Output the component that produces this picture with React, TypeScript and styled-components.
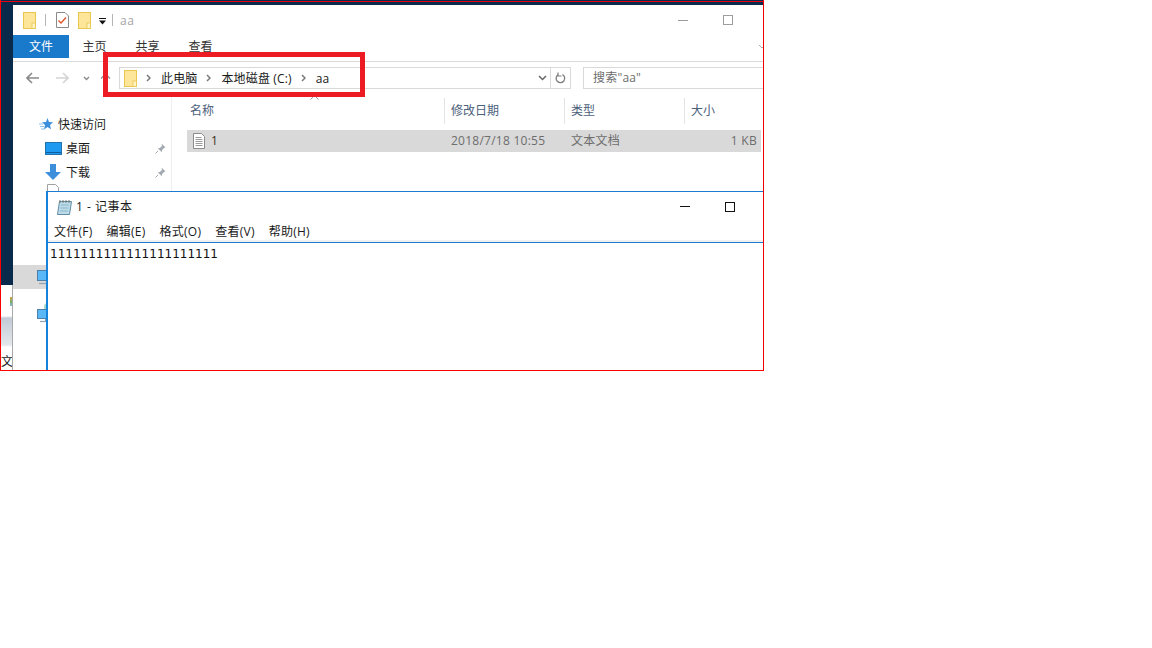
import React from "react";
import styled, { createGlobalStyle } from "styled-components";

const Global = createGlobalStyle`
  html, body { margin: 0; padding: 0; background: #fff; }
  body { font-family: "Open Sans", "Noto Sans CJK SC", sans-serif; font-size: 12px; color: #1a1a1a; }
`;

const Shot = styled.div`
  position: relative;
  width: 764px;
  height: 371px;
  box-sizing: border-box;
  overflow: hidden;
  background: #0a2a4c;
  border-left: 1px solid #f00;
  border-right: 1px solid #e00;
  border-bottom: 1px solid #f00;
`;
const TopStripe = styled.div`
  height: 1px;
  margin-top: 1px;
  background: #e8000f;
`;
const DesktopPeek = styled.div`
  position: absolute;
  left: 0;
  top: 285px;
  width: 11px;
  height: 85px;
  background: linear-gradient(#fff 0, #fff 31px, #c2cbd6 33px, #e4e8ec 60px, #fff 62px);
  border-right: 1px solid #a8a8a8;
`;
const PeekBadge = styled.i`
  position: absolute;
  right: 0;
  top: 12px;
  width: 2px;
  height: 9px;
  background: linear-gradient(#e0a040, #6fb06a 55%, #8fb8d8);
`;
const PeekText = styled.span`
  position: absolute;
  left: 0;
  top: 69px;
  width: 11px;
  overflow: hidden;
  white-space: nowrap;
  font-size: 12px;
  line-height: 16px;
  color: #222;
`;
const Explorer = styled.div`
  position: absolute;
  left: 12px;
  top: 5px;
  width: 750px;
  height: 365px;
  background: #fff;
  display: flex;
  flex-direction: column;
`;
const QuickBar = styled.div`
  height: 30px;
  display: flex;
  align-items: center;
  padding-left: 10px;
  flex: none;
`;
const QuickSep = styled.i<{ $gap: number }>`
  display: block;
  width: 1px;
  height: 12px;
  background: #b5b5b5;
  margin: 0 ${(p) => p.$gap}px;
`;
const WindowTitle = styled.span`
  color: #a6a6a6;
  font-size: 12px;
  margin-left: 2px;
  letter-spacing: 0.5px;
  flex: 1;
`;
const WindowBtns = styled.div`
  display: flex;
  align-items: center;
  gap: 35px;
  margin-right: 30px;
`;
const MinLine = styled.i<{ $c: string }>`
  display: block;
  width: 10px;
  height: 1px;
  background: ${(p) => p.$c};
`;
const MaxBox = styled.i<{ $c: string }>`
  display: block;
  width: 8px;
  height: 8px;
  border: 1px solid ${(p) => p.$c};
`;
const Ribbon = styled.div`
  height: 26px;
  flex: none;
  display: flex;
  box-sizing: content-box;
  border-bottom: 1px solid #dadada;
  position: relative;
  margin-bottom: -1px;
`;
const FileTab = styled.div`
  width: 56px;
  height: 23px;
  background: #1979ca;
  color: #fff;
  text-align: center;
  line-height: 23px;
  font-size: 12px;
  margin-right: -1px;
`;
const RibbonTab = styled.div`
  width: 53px;
  text-align: center;
  line-height: 23px;
  font-size: 12px;
  color: #333;
`;
const Collapse = styled.svg`
  position: absolute;
  right: -2px;
  top: 9px;
`;
const NavRow = styled.div`
  height: 34px;
  margin-bottom: 1px;
  flex: none;
  display: flex;
  align-items: center;
  box-sizing: border-box;
`;
const NavArrows = styled.div`
  width: 106px;
  padding-left: 13px;
  box-sizing: border-box;
  display: flex;
  align-items: center;
  flex: none;
`;
const AddressBar = styled.div`
  width: 452px;
  height: 22px;
  box-sizing: border-box;
  border: 1px solid #d9d9d9;
  display: flex;
  align-items: center;
  padding-left: 4px;
  flex: none;
`;
const Crumb = styled.span`
  font-size: 12px;
  color: #1a1a1a;
  white-space: nowrap;
  letter-spacing: 0.15px;
`;
const CrumbSep = styled.svg`
  margin: 0 10px 0 9px;
  flex: none;
`;
const AddressEnd = styled.div`
  margin-left: auto;
  display: flex;
  align-items: center;
  height: 100%;
`;
const DropCell = styled.div`
  width: 16px;
  display: flex;
  justify-content: center;
`;
const RefreshCell = styled.div`
  width: 19px;
  height: 100%;
  border-left: 1px solid #d9d9d9;
  display: flex;
  align-items: center;
  justify-content: center;
`;
const SearchBox = styled.div`
  margin-left: 12px;
  flex: 1;
  height: 22px;
  box-sizing: border-box;
  border: 1px solid #d9d9d9;
  border-right: none;
  padding-left: 9px;
  line-height: 20px;
  font-size: 12px;
  letter-spacing: 0.2px;
  color: #6d6d6d;
`;
const Body = styled.div`
  flex: 1;
  display: flex;
  min-height: 0;
`;
const Sidebar = styled.div`
  width: 158px;
  flex: none;
  border-right: 1px solid #efefef;
  box-sizing: content-box;
  padding-top: 16px;
  position: relative;
`;
const NavItem = styled.div<{ $indent: number }>`
  height: 24px;
  display: flex;
  align-items: center;
  padding-left: ${(p) => p.$indent}px;
  font-size: 12px;
  color: #1a1a1a;
  position: relative;
`;
const NavLabel = styled.span<{ $gap: number }>`
  margin-left: ${(p) => p.$gap}px;
`;
const Pin = styled.svg`
  position: absolute;
  left: 142px;
  top: 7px;
`;
const HiddenDoc = styled.svg`
  position: absolute;
  left: 34px;
  top: 88px;
`;
const SelectedNav = styled.div`
  position: absolute;
  left: 0;
  top: 169px;
  width: 33px;
  height: 24px;
  background: #d9d9d9;
  display: flex;
  align-items: center;
  justify-content: flex-end;
`;
const NetworkPc = styled.div`
  position: absolute;
  left: 24px;
  top: 206px;
`;
const Files = styled.div`
  flex: 1;
  min-width: 0;
  padding-left: 15px;
`;
const HeaderRow = styled.div`
  display: grid;
  grid-template-columns: 257px 120px 120px 1fr;
  height: 26px;
  margin-top: 2px;
  align-items: stretch;
`;
const HeaderCell = styled.div<{ $first?: boolean }>`
  padding-left: ${(p) => (p.$first ? 3 : 6)}px;
  border-left: ${(p) => (p.$first ? "none" : "1px solid #e5e5e5")};
  color: #4c607a;
  font-size: 12px;
  line-height: 26px;
  position: relative;
`;
const SortCaret = styled.svg`
  position: absolute;
  left: 123px;
  top: -3px;
`;
const FileRow = styled.div`
  display: grid;
  grid-template-columns: 258px 120px 120px 1fr;
  height: 22px;
  width: 574px;
  margin-top: 6px;
  padding-bottom: 0;
  background: #d9d9d9;
  align-items: center;
  font-size: 12px;
  line-height: 20px;
  color: #6d6d6d;
`;
const NameCell = styled.div`
  display: flex;
  align-items: center;
  padding-left: 6px;
  color: #3a2f20;
  gap: 6px;
  margin-top: -1px;
`;
const DateCell = styled.div`
  padding-left: 6px;
  white-space: nowrap;
  letter-spacing: 0.25px;
  margin-top: -1px;
`;
const SizeCell = styled.div`
  text-align: right;
  padding-right: 4px;
  letter-spacing: 0.3px;
  margin-top: -1px;
`;
const Notepad = styled.div`
  position: absolute;
  left: 45px;
  top: 191px;
  width: 718px;
  height: 180px;
  box-sizing: border-box;
  background: #fff;
  border-top: 1px solid #1c7cd0;
  border-left: 2px solid #1383dc;
  display: flex;
  flex-direction: column;
`;
const NoteTitle = styled.div`
  height: 29px;
  flex: none;
  display: flex;
  align-items: center;
  padding-left: 8px;
  font-size: 12px;
  color: #1a1a1a;
`;
const NoteTitleText = styled.span`
  margin: -2px 0 0 3px;
  flex: 1;
  letter-spacing: 0.5px;
`;
const NoteBtns = styled.div`
  display: flex;
  align-items: center;
  gap: 35px;
  margin-right: 29px;
`;
const NoteMenu = styled.div`
  height: 22px;
  flex: none;
  display: flex;
  align-items: center;
  padding: 0 0 1px 6px;
  box-sizing: border-box;
  gap: 14px;
  font-size: 12px;
  letter-spacing: 0.25px;
  color: #1a1a1a;
  border-bottom: 1px solid #1c7cd0;
  box-shadow: inset 0 -2px 0 #f0f0f0;
`;
const NoteText = styled.div`
  font-family: "DejaVu Sans", sans-serif;
  font-size: 12px;
  line-height: 16px;
  padding: 3px 0 0 2px;
  color: #111;
`;
const Callout = styled.div`
  position: absolute;
  left: 102px;
  top: 52px;
  width: 262px;
  height: 45px;
  box-sizing: border-box;
  border: 5px solid #ed1c24;
  pointer-events: none;
`;

const Folder = () => (
  <svg width="13" height="17" viewBox="0 0 13 17">
    <rect x="0.500" y="0.500" width="12" height="16" fill="#fde59a" stroke="#e9c64d" />
    <rect x="9" y="11" width="3.500" height="5.500" fill="#fff3c6" stroke="#e9c64d" strokeWidth="0.800" />
  </svg>
);

const Chevron = () => (
  <CrumbSep width="5" height="8" viewBox="0 0 5 8">
    <path d="M1 1l3 3-3 3" fill="none" stroke="#7a7a7a" strokeWidth="1.500" />
  </CrumbSep>
);

const DocIcon = () => (
  <svg width="12" height="16" viewBox="0 0 12 16">
    <path d="M.5.5h8l3 3v12H.5z" fill="#fff" stroke="#8c8c8c" />
    <path d="M2.500 4.500h6M2.500 6.500h7M2.500 8.500h7M2.500 10.500h7M2.500 12.500h7" stroke="#9a9a9a" />
  </svg>
);

const PinIcon = () => (
  <Pin width="11" height="11" viewBox="0 0 11 11">
    <path d="M6.500.5l4 4-1.500.6-2 2.200-.2 2-4-4 2-.3 2.200-2z" fill="#a3a9b0" />
    <path d="M3 8l-2.500 2.500" stroke="#a3a9b0" />
  </Pin>
);

const Monitor = () => (
  <svg width="17" height="14" viewBox="0 0 17 14">
    <rect x=".5" y=".5" width="16" height="9" fill="#5bb8f7" stroke="#4f7fa6" />
    <path d="M3 12.500h11" stroke="#8ea2b3" strokeWidth="1.200" />
    <path d="M8.500 10v2" stroke="#8ea2b3" />
  </svg>
);

export default function App() {
  return (
    <>
      <Global />
      <Shot>
        <TopStripe />
        <DesktopPeek>
          <PeekBadge />
          <PeekText>文件</PeekText>
        </DesktopPeek>
        <Explorer>
          <QuickBar>
            <Folder />
            <QuickSep $gap={9} />
            <svg width="13" height="16" viewBox="0 0 13 16" style={{ marginLeft: 1 }}>
              <path d="M.5.5h8.500l3.500 3.500v11.500H.5z" fill="#fff" stroke="#8a8a8a" />
              <path d="M2.500 8.500l2.500 2.500 5-5.500" fill="none" stroke="#e2572d" strokeWidth="1.500" />
            </svg>
            <span style={{ width: 9 }} />
            <Folder />
            <svg width="8" height="7" viewBox="0 0 8 7" style={{ marginLeft: 8, marginTop: 3 }}>
              <path d="M0 0h7v1H0zM0 2.500h7L3.500 6.500z" fill="#111" />
            </svg>
            <QuickSep $gap={5} />
            <WindowTitle>aa</WindowTitle>
            <WindowBtns>
              <MinLine $c="#9c9c9c" />
              <MaxBox $c="#9c9c9c" />
            </WindowBtns>
          </QuickBar>
          <Ribbon>
            <FileTab>文件</FileTab>
            <RibbonTab>主页</RibbonTab>
            <RibbonTab>共享</RibbonTab>
            <RibbonTab>查看</RibbonTab>
            <Collapse width="6" height="6" viewBox="0 0 6 6">
              <path d="M0 1l3 3 3-3" fill="none" stroke="#b0b0b0" />
            </Collapse>
          </Ribbon>
          <NavRow>
            <NavArrows>
              <svg width="13" height="12" viewBox="0 0 13 12">
                <path d="M6 1L1 6l5 5M1 6h12" fill="none" stroke="#8a8a8a" strokeWidth="1.600" />
              </svg>
              <svg width="13" height="12" viewBox="0 0 13 12" style={{ marginLeft: 17 }}>
                <path d="M7 1l5 5-5 5M12 6H0" fill="none" stroke="#d4d4d4" strokeWidth="1.600" />
              </svg>
              <svg width="7" height="5" viewBox="0 0 7 5" style={{ marginLeft: 14 }}>
                <path d="M1 1l2.500 2.500L6 1" fill="none" stroke="#8a8a8a" strokeWidth="1.400" />
              </svg>
              <svg width="11" height="10" viewBox="0 0 11 10" style={{ marginLeft: 10 }}>
                <path d="M1 5.500l4.500-4.500 4.500 4.500M5.500 1v9" fill="none" stroke="#9a9a9a" strokeWidth="1.500" />
              </svg>
            </NavArrows>
            <AddressBar>
              <Folder />
              <Chevron />
              <Crumb>此电脑</Crumb>
              <Chevron />
              <Crumb>本地磁盘 (C:)</Crumb>
              <Chevron />
              <Crumb>aa</Crumb>
              <AddressEnd>
                <DropCell>
                  <svg width="9" height="6" viewBox="0 0 9 6">
                    <path d="M1 1l3.500 3.500L8 1" fill="none" stroke="#666" strokeWidth="1.500" />
                  </svg>
                </DropCell>
                <RefreshCell>
                  <svg width="11" height="12" viewBox="0 0 11 12">
                    <path d="M7.500 2.600A4.300 4.300 0 1 1 3 2.800" fill="none" stroke="#7f7f7f" strokeWidth="1.300" />
                    <path d="M3 .5v3.500h3.500" fill="none" stroke="#7f7f7f" strokeWidth="1.200" />
                  </svg>
                </RefreshCell>
              </AddressEnd>
            </AddressBar>
            <SearchBox>搜索"aa"</SearchBox>
          </NavRow>
          <Body>
            <Sidebar>
              <NavItem $indent={26}>
                <svg width="14" height="13" viewBox="0 0 14 13">
                  <path d="M8.500 0l1.500 4 4 .3-3 2.700 1 4.200-3.500-2.300L5 11.500l1-4.500-3-2.700 4-.3z" fill="#3b8fdb" />
                  <path d="M0 6h4M1 8.500h4M2 11h3" stroke="#8cc0ec" />
                </svg>
                <NavLabel $gap={5}>快速访问</NavLabel>
              </NavItem>
              <NavItem $indent={32}>
                <svg width="17" height="13" viewBox="0 0 17 13">
                  <rect x=".5" y=".5" width="16" height="12" fill="#1e9bf0" stroke="#2272b0" />
                  <path d="M1 10.500h15" stroke="#0f5f9e" />
                </svg>
                <NavLabel $gap={4}>桌面</NavLabel>
                <PinIcon />
              </NavItem>
              <NavItem $indent={32}>
                <svg width="16" height="16" viewBox="0 0 16 16">
                  <path d="M5 0h6v8h5l-8 8-8-8h5z" fill="#3d8fdc" />
                </svg>
                <NavLabel $gap={5}>下载</NavLabel>
                <PinIcon />
              </NavItem>
              <HiddenDoc width="12" height="10" viewBox="0 0 12 10">
                <path d="M.5.5h8l3 3v6H.5z" fill="#fff" stroke="#a0a0a0" />
              </HiddenDoc>
              <SelectedNav>
                <svg width="9" height="15" viewBox="0 0 9 15">
                  <rect x=".5" y=".5" width="10" height="10" fill="#5bb8f7" stroke="#4f7fa6" />
                  <path d="M2 13.500h7" stroke="#8ea2b3" strokeWidth="1.200" />
                </svg>
              </SelectedNav>
              <NetworkPc>
                <svg width="9" height="7" viewBox="0 0 9 7" style={{ display: "block", marginLeft: 5 }}>
                  <circle cx="6" cy="5" r="4" fill="#a6d8c8" />
                </svg>
                <Monitor />
              </NetworkPc>
            </Sidebar>
            <Files>
              <HeaderRow>
                <HeaderCell $first>
                  名称
                  <SortCaret width="9" height="5" viewBox="0 0 9 5">
                    <path d="M.5 4.500l4-4 4 4" fill="none" stroke="#9a9a9a" />
                  </SortCaret>
                </HeaderCell>
                <HeaderCell>修改日期</HeaderCell>
                <HeaderCell>类型</HeaderCell>
                <HeaderCell>大小</HeaderCell>
              </HeaderRow>
              <FileRow>
                <NameCell>
                  <DocIcon />1
                </NameCell>
                <DateCell>2018/7/18 10:55</DateCell>
                <DateCell>文本文档</DateCell>
                <SizeCell>1 KB</SizeCell>
              </FileRow>
            </Files>
          </Body>
        </Explorer>
        <Notepad>
          <NoteTitle>
            <svg width="17" height="16" viewBox="0 0 17 16">
              <path d="M3.500 2.500h12l-2 13h-12z" fill="#bcdcea" stroke="#5f8ca3" />
              <path d="M4 1v3M7 1v3M10 1v3M13 1v3" stroke="#777" />
              <path d="M5 6h8M4.500 9h8M4 12h8" stroke="#8fb6c9" />
            </svg>
            <NoteTitleText>1 - 记事本</NoteTitleText>
            <NoteBtns>
              <MinLine $c="#111" />
              <MaxBox $c="#111" />
            </NoteBtns>
          </NoteTitle>
          <NoteMenu>
            <span>文件(F)</span>
            <span>编辑(E)</span>
            <span>格式(O)</span>
            <span>查看(V)</span>
            <span>帮助(H)</span>
          </NoteMenu>
          <NoteText>1111111111111111111111</NoteText>
        </Notepad>
        <Callout />
      </Shot>
    </>
  );
}
